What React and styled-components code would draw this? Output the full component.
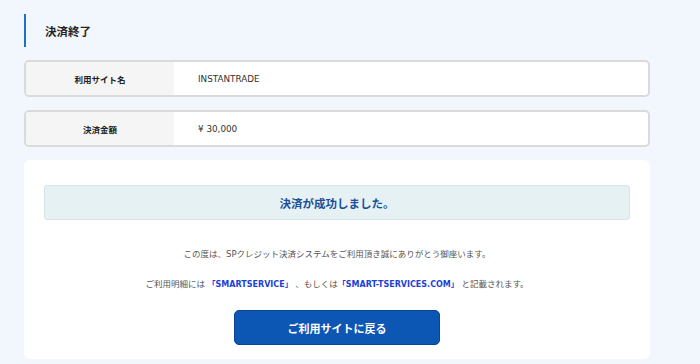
import React from "react";
import styled, { createGlobalStyle } from "styled-components";

const GlobalStyle = createGlobalStyle`
  html, body {
    margin: 0;
    padding: 0;
    background: #f2f6fd;
  }
  body {
    font-family: "DejaVu Sans", "Noto Sans CJK JP", sans-serif;
    color: #222;
  }
`;

const Page = styled.div`
  width: 626px;
  padding: 14px 0 6px 24px;
`;

const Heading = styled.h1`
  margin: 0;
  height: 33px;
  display: flex;
  align-items: center;
  border-left: 2px solid #1f6fc9;
  padding-left: 19px;
  font-size: 11.5px;
  font-weight: 700;
  color: #222;
`;

const InfoRow = styled.div`
  display: flex;
  height: 33px;
  margin-top: ${(p) => p.$top}px;
  border: 2px solid #dadada;
  border-radius: 5px;
  background: #fff;
  overflow: hidden;
`;

const Label = styled.div`
  width: 148px;
  display: flex;
  align-items: center;
  justify-content: center;
  background: #f5f5f5;
  font-size: 8.5px;
  font-weight: 700;
  color: #222;
`;

const Value = styled.div`
  flex: 1;
  display: flex;
  align-items: center;
  padding-left: 24px;
  font-size: 8.8px;
  color: #333;
`;

const Card = styled.div`
  margin-top: 13px;
  background: #fff;
  border-radius: 6px;
  padding: 25px 20px 14px;
  display: flex;
  flex-direction: column;
  align-items: center;
`;

const Notice = styled.div`
  align-self: stretch;
  height: 33px;
  display: flex;
  align-items: center;
  justify-content: center;
  background: #e6f1f3;
  border: 1px solid #d3e5ea;
  border-radius: 3px;
  font-size: 11.5px;
  font-weight: 700;
  color: #1a4f9c;
`;

const Message = styled.p`
  margin: ${(p) => p.$top}px 0 0;
  font-size: 8.5px;
  line-height: 12px;
  color: #555;
  text-align: center;
`;

const Strong = styled.span`
  color: #1c3fd9;
  font-weight: 700;
  font-size: 8px;
`;

const BackButton = styled.button`
  margin-top: 19px;
  width: 206px;
  height: 35px;
  background: #0c56b4;
  border: 1px solid #0a4594;
  border-radius: 5px;
  color: #fff;
  font-family: inherit;
  font-size: 11px;
  font-weight: 700;
  cursor: pointer;
`;

const App = () => {
  return (
    <>
      <GlobalStyle />
      <Page>
        <Heading>決済終了</Heading>
        <InfoRow $top={13}>
          <Label>利用サイト名</Label>
          <Value>INSTANTRADE</Value>
        </InfoRow>
        <InfoRow $top={13}>
          <Label>決済金額</Label>
          <Value>¥ 30,000</Value>
        </InfoRow>
        <Card>
          <Notice>決済が成功しました。</Notice>
          <Message $top={28}>
            この度は、SPクレジット決済システムをご利用頂き誠にありがとう御座います。
          </Message>
          <Message $top={18}>
            ご利用明細には <Strong>「SMARTSERVICE」</Strong> 、もしくは
            <Strong>「SMART-TSERVICES.COM」</Strong> と記載されます。
          </Message>
          <BackButton>ご利用サイトに戻る</BackButton>
        </Card>
      </Page>
    </>
  );
};

export default App;
